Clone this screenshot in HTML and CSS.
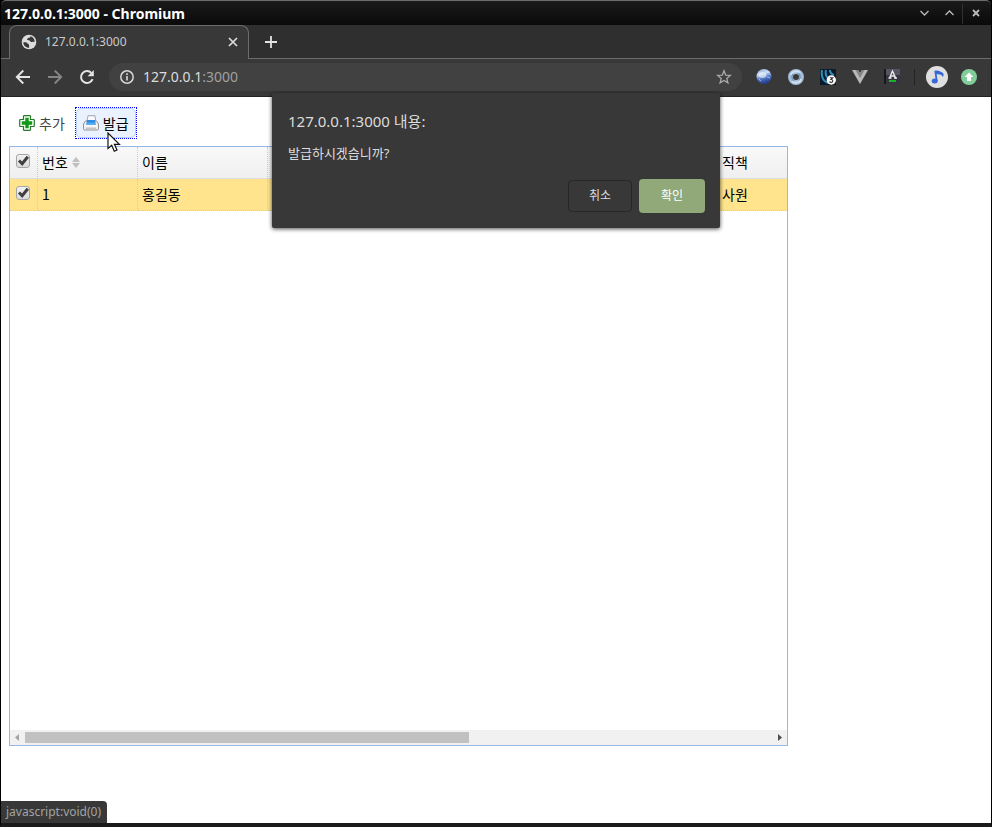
FILE: index.html
```html
<!DOCTYPE html>
<html lang="ko">
<head>
<meta charset="utf-8">
<title>127.0.0.1:3000</title>
<link rel="stylesheet" href="styles.css">
</head>
<body>
<div class="window">
  <header class="titlebar">
    <span class="window-title">127.0.0.1:3000 - Chromium</span>
    <div class="window-controls">
      <button class="win-btn" aria-label="최소화"><svg width="9" height="6" viewBox="0 0 9 6"><path d="M.5 1l4 4 4-4" fill="none" stroke="#bbb" stroke-width="1.3"/></svg></button>
      <button class="win-btn" aria-label="최대화"><svg width="9" height="6" viewBox="0 0 9 6"><path d="M.5 5l4-4 4 4" fill="none" stroke="#bbb" stroke-width="1.3"/></svg></button>
      <button class="win-btn win-close" aria-label="닫기"><svg width="8" height="8" viewBox="0 0 8 8"><path d="M1 1l6 6M7 1L1 7" fill="none" stroke="#bbb" stroke-width="1.800"/></svg></button>
    </div>
  </header>
  <nav class="tabstrip">
    <div class="tab-edge"></div>
    <div class="tab">
      <svg width="16" height="16" viewBox="0 0 16 16"><circle cx="8" cy="8" r="7.300" fill="#ddd"/><path d="M2.300 8.300c2.200-.2 3.500-.2 4 .9.400 1 1.800.5 1.800 1.900v2.700C4.800 13.800 2.400 11.500 2.300 8.300z" fill="#383838"/><path d="M9.300 2.200c.2 1.300-.6 1.500-1.700 1.600-1 .1-.6 1-1.400 1.300-.6.300.1 1.300 1.600 1.200 1.300 0 1.200 1.500 2.300 1.600 1.200.1 1.800-.8 3.500.3C13.900 5.300 12.300 2.900 9.300 2.200z" fill="#383838"/></svg>
      <span class="tab-title">127.0.0.1:3000</span>
      <button class="icon-btn tab-close" aria-label="탭 닫기"><svg width="10" height="10" viewBox="0 0 10 10"><path d="M1 1l8 8M9 1L1 9" stroke="#ddd" stroke-width="1.700"/></svg></button>
    </div>
    <div class="tab-rest">
      <button class="icon-btn" aria-label="새 탭"><svg width="12" height="12" viewBox="0 0 12 12"><path d="M6 0v12M0 6h12" stroke="#e4e4e4" stroke-width="1.800"/></svg></button>
    </div>
  </nav>
  <div class="toolbar">
    <div class="nav-buttons">
      <button class="icon-btn" aria-label="뒤로"><svg width="16" height="16" viewBox="0 0 16 16"><path d="M15 8H2M8.300 1.500L1.800 8l6.500 6.500" fill="none" stroke="#e4e4e4" stroke-width="1.900"/></svg></button>
      <button class="icon-btn" aria-label="앞으로"><svg width="16" height="16" viewBox="0 0 16 16"><path d="M1 8h13M7.700 1.500L14.200 8l-6.500 6.500" fill="none" stroke="#858585" stroke-width="1.900"/></svg></button>
      <button class="icon-btn" aria-label="새로고침"><svg width="16" height="16" viewBox="0 0 16 16"><path d="M13.600 10.200A6 6 0 1 1 12.400 3.900" fill="none" stroke="#e4e4e4" stroke-width="2"/><path d="M14.800 1v6.200H8.600z" fill="#e4e4e4"/></svg></button>
    </div>
    <div class="omnibox">
      <svg width="16" height="16" viewBox="0 0 16 16"><circle cx="8" cy="8" r="6.200" fill="none" stroke="#d8d8d8" stroke-width="1.500"/><path d="M8 7v4.500M8 4.300v1.700" stroke="#d8d8d8" stroke-width="1.600"/></svg>
      <span class="url">127.0.0.1<span class="port">:3000</span></span>
      <button class="icon-btn" aria-label="북마크"><svg width="16" height="16" viewBox="0 0 16 16"><path d="M8 1.800l1.700 4.300 4.600.3-3.500 3 1.100 4.400L8 11.400l-3.900 2.400 1.100-4.400-3.500-3 4.600-.3z" fill="none" stroke="#aaa" stroke-width="1.300"/></svg></button>
    </div>
    <div class="extensions">
      <svg width="16" height="16" viewBox="0 0 16 16"><defs><linearGradient id="globe" x1="0" y1="0" x2=".3" y2="1"><stop offset="0" stop-color="#8fabd8"/><stop offset=".4" stop-color="#c4d8f3"/><stop offset=".65" stop-color="#5c82c8"/><stop offset="1" stop-color="#243f94"/></linearGradient></defs><circle cx="8" cy="7.500" r="7.500" fill="url(#globe)"/><ellipse cx="6.500" cy="6" rx="4" ry="3" fill="#f1f7ff" fill-opacity=".6"/><path d="M9 2l4 2M3 10l2 2M11 8l3 1" stroke="#e5efff" stroke-opacity=".5"/></svg>
      <svg width="16" height="16" viewBox="0 0 16 16"><circle cx="8" cy="8" r="5.500" fill="none" stroke="#a5bdd7" stroke-width="5"/><path d="M3 6c1-4 7-5 9-2M13 10c-1 4-7 5-9 2" fill="none" stroke="#d3e2f1" stroke-width="2"/><path d="M5 5c-2 2-1 6 1 7M11 11c2-2 1-6-1-7" fill="none" stroke="#6f91b9" stroke-width="1.200"/></svg>
      <svg width="16" height="16" viewBox="0 0 16 16"><path d="M0 0h16v16H0z" fill="#091b2b"/><path d="M2 1c-1 6 1 11 6 13M6 1c-1 4 0 7 3 9M10 1c0 3 1 4 4 5" fill="none" stroke="#328bb6" stroke-width="2"/><circle cx="11.300" cy="11" r="4.700" fill="#fff"/><path d="M9.800 8.700h2.900l-1.700 1.800c2.500 0 2.200 2.900.2 2.900-.8 0-1.300-.2-1.700-.7" fill="none" stroke="#333" stroke-width="1.100"/></svg>
      <svg width="16" height="16" viewBox="0 0 16 16"><path d="M0 1h6l2 3 2-3h6L8 15z" fill="#b9b9b9"/><path d="M3.500 1H6l2 3 2-3h2.500L8 9z" fill="#858585"/></svg>
      <svg width="16" height="16" viewBox="0 0 16 16"><path d="M0 0h16v15H0z" fill="#363441"/><path d="M0 0h2v15H0z" fill="#17171e"/><path d="M2 0h14v6H2z" fill="#565461"/><path d="M5.500 9L8.500 2l3.200 7M6.700 7h3.700M4.500 9h3M10 9h3" fill="none" stroke="#eee" stroke-width="1.300"/><path d="M5 12h7" stroke="#11dc16" stroke-width="1.500"/></svg>
      <span class="divider"></span>
      <svg width="22" height="22" viewBox="0 0 22 22"><circle cx="11" cy="11" r="11" fill="#dfdfdf"/><ellipse cx="8.700" cy="15" rx="3" ry="2.500" fill="#3868d8"/><path d="M10.800 15.500L9.300 5.200" fill="none" stroke="#3868d8" stroke-width="1.800"/><path d="M8.500 4.800c3-1 5 .3 7.500 1.500 2 1 2.200 3.500.6 4.800-.3-2.800-3.500-3.300-6.500-2.700z" fill="#3868d8"/></svg>
      <svg width="16" height="16" viewBox="0 0 16 16"><circle cx="8" cy="8" r="8" fill="#82ce98"/><path d="M8 3.500l4.300 4.500H10v4H6V8H3.700z" fill="#fff"/></svg>
    </div>
  </div>
  <main class="page">
    <div class="actions">
      <a class="action" href="javascript:void(0)">
        <span class="action-face">
          <svg width="16" height="16" viewBox="0 0 16 16"><path d="M5 .7h6l.5.5V4.500h3.300l.5.500v6l-.5.500h-3.300v3.300l-.5.500H5l-.5-.5v-3.300H1.200l-.5-.5V5l.5-.5h3.300V1.200z" fill="#f5fff0" stroke="#27772c" stroke-width="1.200"/><path d="M6.300 2.800h3.400v3.500h3.500v3.400H9.700v3.500H6.300V9.700H2.800V6.300h3.500z" fill="#149619"/></svg>
          <span>추가</span>
        </span>
      </a>
      <a class="action action-focus" href="javascript:void(0)">
        <span class="action-face">
          <svg width="16" height="16" viewBox="0 0 16 16"><path d="M3.500 8L5 .7h7l1 7.300z" fill="#fafbfe" stroke="#a2a7b2"/><path d="M2.500 6h11L15.500 9v4.800c0 .8-.4 1.200-1.200 1.200H1.700c-.8 0-1.200-.4-1.200-1.200V9z" fill="#f0f0f2" stroke="#929297"/><path d="M4 5h8l.8 4.800H3.200z" fill="#2f8ee2"/><path d="M3.700 7.800h8.600l.3 1.700H3.400z" fill="#58b2f3"/><path d="M2 10.800h12" stroke="#fff"/><path d="M3 12.500h10v1.500H3z" fill="#c4c4c7"/></svg>
          <span>발급</span>
        </span>
      </a>
      <svg class="pointer" width="14" height="21" viewBox="0 0 14 21"><path d="M1 1v15.500l3.700-3.300 2.600 6 2.700-1.200-2.600-5.700h5z" fill="#fff" stroke="#111" stroke-width="1.200"/></svg>
    </div>
    <section class="grid">
      <div class="grid-view">
        <table>
          <colgroup><col class="col-check"><col class="col-no"><col class="col-name"><col class="col-mid"><col class="col-mid"><col class="col-mid"><col class="col-mid"></colgroup>
          <thead>
            <tr><th class="check"><input type="checkbox" aria-label="전체 선택" checked></th><th>번호<svg class="sort" width="8" height="11" viewBox="0 0 8 11"><path d="M0 5l4-5 4 5zM0 6l4 5 4-5z" fill="#bfbfbf"/></svg></th><th>이름</th><th></th><th></th><th></th><th>직책</th></tr>
          </thead>
          <tbody>
            <tr><td class="check"><input type="checkbox" aria-label="행 선택" checked></td><td>1</td><td>홍길동</td><td></td><td></td><td></td><td>사원</td></tr>
          </tbody>
        </table>
      </div>
      <div class="scrollbar">
        <svg width="15" height="15" viewBox="0 0 15 15"><path d="M9 4v7L5 7.500z" fill="#a3a3a3"/></svg>
        <div class="track"><div class="thumb"></div></div>
        <svg width="15" height="15" viewBox="0 0 15 15"><path d="M6 4v7l4-3.500z" fill="#505050"/></svg>
      </div>
    </section>
  </main>
  <div class="dialog" role="dialog" aria-labelledby="dialog-title">
    <h1 id="dialog-title">127.0.0.1:3000 내용:</h1>
    <p>발급하시겠습니까?</p>
    <div class="dialog-buttons">
      <button class="btn">취소</button>
      <button class="btn btn-primary">확인</button>
    </div>
  </div>
  <div class="status">javascript:void(0)</div>
</div>
</body>
</html>
```
FILE: styles.css
```css
* { box-sizing: border-box; }

body {
  margin: 0;
  background: #000;
  font-family: "Noto Sans", "Noto Sans CJK KR", sans-serif;
}

svg { display: block; flex: none; }

button {
  margin: 0;
  padding: 0;
  border: 0;
  background: none;
  font-family: inherit;
}

.window {
  position: relative;
  display: flex;
  flex-direction: column;
  height: 100vh;
  border: solid #000;
  border-width: 0 1px;
  border-bottom: 4px solid #1b1b1b;
}

/* Title bar */
.titlebar {
  display: flex;
  align-items: center;
  justify-content: space-between;
  height: 25px;
  padding: 2px 2px 0 3px;
  border-top: 1px solid #6b6b6b;
  border-radius: 5px 5px 0 0;
  background: linear-gradient(#1a1a1a, #0a0a0a);
}

.window-title {
  color: #fff;
  font-size: 14px;
  font-weight: 700;
  line-height: 20px;
}

.window-controls { display: flex; }

.win-btn {
  display: flex;
  align-items: center;
  justify-content: center;
  width: 25px;
  height: 20px;
  padding-bottom: 2px;
}

.win-close {
  width: 27px;
  border-left: 1px solid #303030;
}

/* Tabs */
.tabstrip {
  display: flex;
  height: 34px;
  background: #2f2f2f;
}

.tab-edge {
  width: 8px;
  border-bottom: 1px solid #6c6c6c;
}

.tab {
  display: flex;
  align-items: center;
  width: 240px;
  padding: 0 10px 2px 11px;
  gap: 8px;
  border: 1px solid #6c6c6c;
  border-bottom: 0;
  border-radius: 8px 8px 0 0;
  background: #383838;
}

.tab-title {
  flex: 1;
  color: #cacaca;
  font-size: 12px;
  line-height: 16px;
}

.icon-btn {
  display: flex;
  align-items: center;
  justify-content: center;
}

.tab-rest {
  display: flex;
  flex: 1;
  padding-left: 16px;
  border-bottom: 1px solid #6c6c6c;
}

/* Address bar */
.toolbar {
  display: flex;
  align-items: center;
  height: 38px;
  padding: 0 14px 2px;
  border-bottom: 1px solid #222;
  background: #383838;
}

.nav-buttons {
  display: flex;
  gap: 16px;
}

.omnibox {
  display: flex;
  flex: 1;
  align-items: center;
  height: 28px;
  margin-left: 14px;
  padding: 0 10px;
  gap: 8px;
  border-radius: 14px;
  background: #414141;
}

.url {
  flex: 1;
  color: #dcdcdc;
  font-size: 14px;
  line-height: 20px;
}

.port { color: #a0a0a0; }

.extensions {
  display: flex;
  align-items: center;
  margin-left: 14px;
  gap: 16px;
}

.divider {
  width: 1px;
  height: 16px;
  margin: 0 -5px 0 -2px;
  background: #222;
}

.extensions svg:last-child { margin-left: -3px; }

/* Page */
.page {
  display: flex;
  flex: 1;
  flex-direction: column;
  min-height: 0;
  padding: 10px 8px 77px;
  background: #fff;
  font-family: "Noto Sans CJK KR", sans-serif;
  font-size: 14px;
}

.actions {
  position: relative;
  display: flex;
  align-items: flex-start;
  height: 39px;
  padding-left: 2px;
  gap: 2px;
}

.action {
  border: 1px solid transparent;
  color: #444;
  text-decoration: none;
  line-height: 24px;
}

.action-face {
  display: flex;
  align-items: center;
  height: 30px;
  padding: 0 6px;
  gap: 4px;
  border: 1px solid transparent;
  border-radius: 5px;
}

.action-focus {
  border: 1px dotted #00f;
  color: #000;
}

.action-focus .action-face {
  border-color: #b7d2ff;
  background: #eaf2ff;
}

.pointer {
  position: absolute;
  top: 25px;
  left: 98px;
}

/* Data grid */
.grid {
  display: flex;
  flex: 1;
  flex-direction: column;
  min-height: 0;
  max-width: 779px;
  border: 1px solid #95b8e7;
}

.grid-view {
  flex: 1;
  overflow: hidden;
}

table {
  width: 858px;
  border-collapse: separate;
  border-spacing: 0;
  table-layout: fixed;
}

.col-check { width: 28px; }
.col-no { width: 100px; }
.col-name { width: 130px; }
.col-mid { width: 150px; }

th, td {
  height: 32px;
  padding: 0 4px 2px;
  border-right: 1px dotted #ccc;
  border-bottom: 1px dotted #ccc;
  color: #000;
  font-weight: 400;
  line-height: 20px;
  text-align: left;
}

th {
  border-bottom: 1px solid #ddd;
  background: linear-gradient(#f9f9f9, #efefef);
}

td { background: #ffe48d; }

.check { padding: 0 6px; }

.check input {
  display: block;
  appearance: none;
  width: 14px;
  height: 14px;
  margin: 0 0 3px;
  border: 1px solid #a6a6a6;
  border-radius: 3px;
  background: linear-gradient(#f2f2f2, #dcdcdc);
}

.check input:checked::before {
  content: "";
  display: block;
  width: 12px;
  height: 12px;
  background: #404040;
  clip-path: polygon(8% 54%, 25% 38%, 42% 55%, 80% 6%, 100% 22%, 44% 92%);
}

.sort {
  display: inline-block;
  margin-left: 4px;
}

.scrollbar {
  display: flex;
  height: 15px;
  background: #f1f1f1;
}

.track {
  flex: 1;
  padding: 2px 0;
}

.thumb {
  width: 59.4%;
  height: 11px;
  background: #c1c1c1;
}

/* Confirm dialog */
.dialog {
  position: absolute;
  top: 93px;
  left: 50%;
  width: 448px;
  padding: 17px 15px 15px 16px;
  border-radius: 2px;
  background: #383838;
  box-shadow: 0 1px 4px rgba(0, 0, 0, 0.7);
  color: #dcdcdc;
  transform: translateX(-50%);
}

.dialog h1 {
  margin: 0 0 11px;
  font-size: 15px;
  font-weight: 400;
  line-height: 22px;
}

.dialog p {
  margin: 0 0 16px;
  font-size: 13px;
  line-height: 20px;
}

.dialog-buttons {
  display: flex;
  align-items: center;
  justify-content: flex-end;
  gap: 7px;
}

.btn {
  width: 64px;
  height: 32px;
  border: 1px solid #262626;
  border-radius: 4px;
  color: #dcdcdc;
  font-size: 12px;
  line-height: 18px;
}

.btn-primary {
  width: 66px;
  height: 34px;
  border: 0;
  background: #91a878;
  color: #fff;
}

.status {
  position: absolute;
  bottom: 0;
  left: 0;
  padding: 2px 6px 3px 5px;
  border-top-right-radius: 4px;
  background: #383838;
  color: #a3a3a3;
  font-size: 12px;
  line-height: 17px;
}
```
